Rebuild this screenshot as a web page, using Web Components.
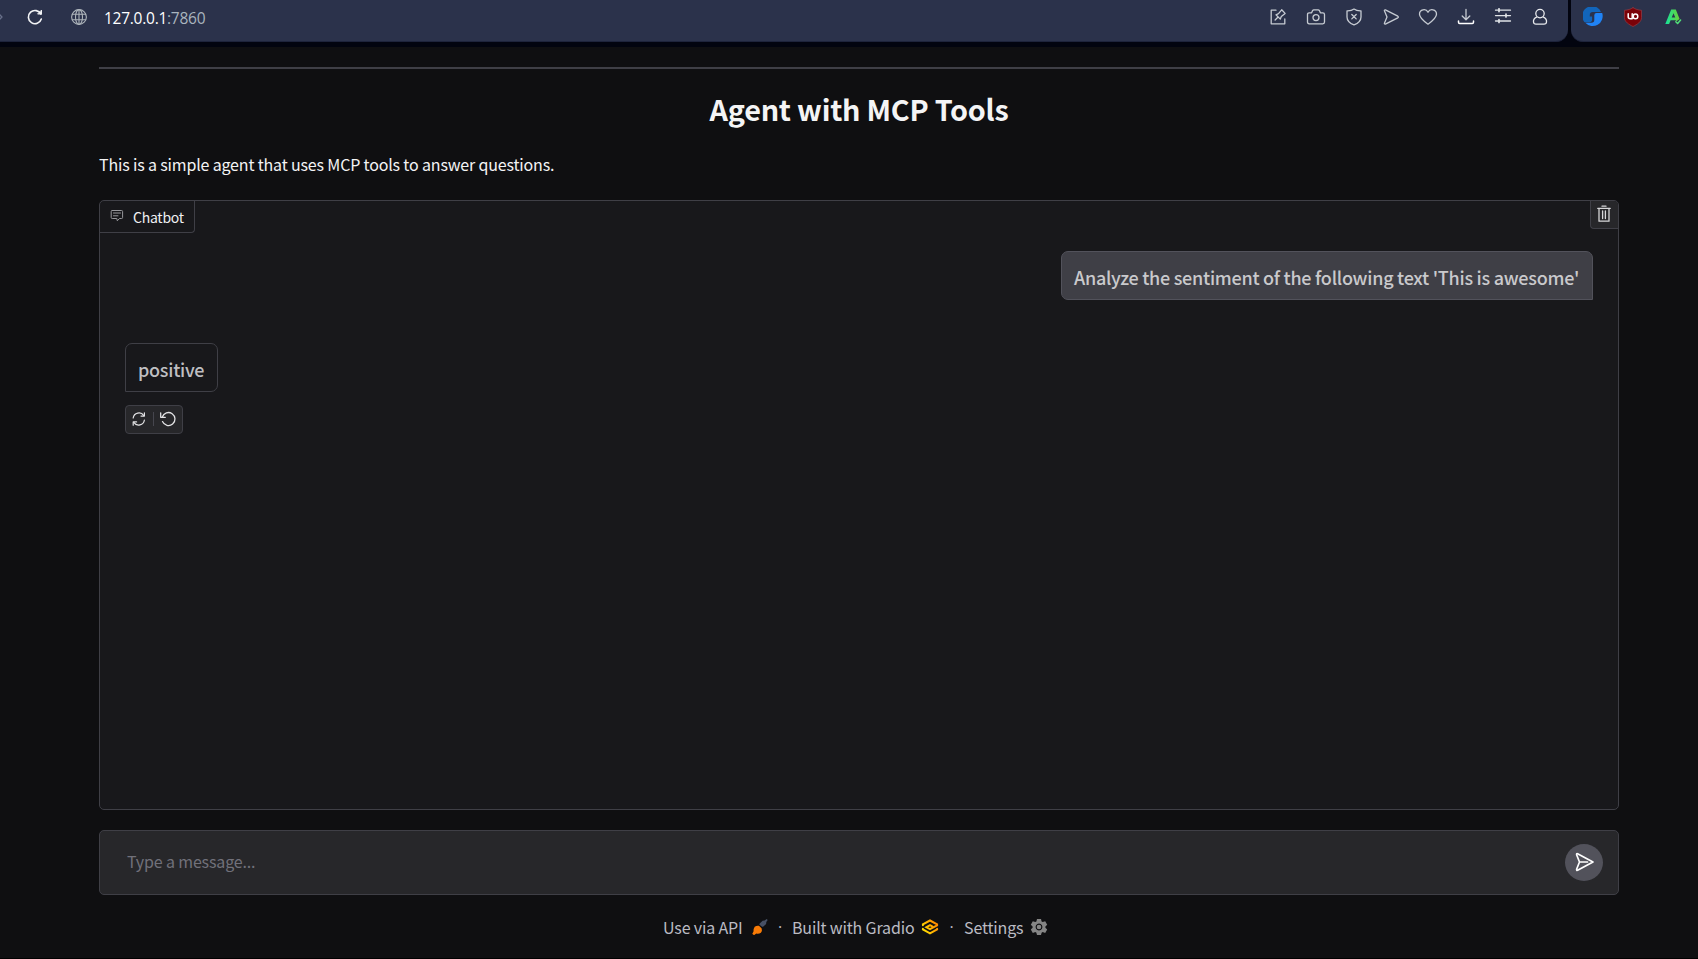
<!DOCTYPE html>
<html lang="en"><head><meta charset="utf-8"><title>Agent with MCP Tools</title>
<style>html,body{margin:0;background:#0f0f11;height:959px;overflow:hidden}</style></head>
<body><agent-page></agent-page>
<script>
const ICONS = {
 next:[10,20,'<path d="M-3 5l5 5-5 5" stroke="#68708a"/>'],
 reload:[18,18,'<path d="M14.9 6.2A6.6 6.6 0 1 0 15.3 11" stroke="#f2f3f5" stroke-width="1.6"/><path d="M12 6h3.5V2.5z" fill="#f2f3f5" stroke="#f2f3f5" stroke-width="1"/>'],
 globe:[18,18,'<g stroke="#aeb5bb" stroke-width="1.1"><circle cx="9" cy="9" r="7.4"/><ellipse cx="9" cy="9" rx="3.5" ry="7.4"/><path d="M9 1.6v14.8M2.4 6.2h13.2M2.4 11.8h13.2"/></g>'],
 pin:[18,18,'<path d="M7 2.2H2.2v13.6h13.6V11"/><path d="M6.1 12l3-3M7 6.8l4.3 4.3 1-2.5 3.8-3.2-3.4-3.6-3.2 3.9z"/>'],
 camera:[20,18,'<path d="M3.2 4.8h2.4l1-2.2q.4-.7 1.2-.7h4.4q.8 0 1.2.7l1 2.2h2.4q1.7 0 1.7 1.7v7.6q0 1.7-1.7 1.7H3.2q-1.7 0-1.7-1.7V6.5q0-1.7 1.7-1.7z"/><circle cx="10" cy="9.6" r="3"/>'],
 shield:[18,18,'<path d="M9 1.1c2 1.5 4.5 1.9 7 1.8v6c0 4-3.3 6.5-7 8-3.7-1.5-7-4-7-8v-6c2.5.1 5-.3 7-1.8z"/><path d="M6.8 6.5l4.4 4.4m0-4.4l-4.4 4.4"/>'],
 plane:[18,18,'<path d="M3.4 1.9L15.8 8.2q1.2.8 0 1.6L3.4 16.1Q2 16.3 2.5 15L5 9 2.5 3Q2 1.7 3.4 1.9z"/>'],
 heart:[20,18,'<path d="M10 16.2C5 12.5 1.5 9.5 1.5 6.2c0-5 6.5-6 8.5-2 2-4 8.5-3 8.5 2 0 3.3-3.5 6.3-8.5 10z"/>'],
 download:[18,18,'<path d="M9 1.5v10M5.2 8L9 11.8 12.8 8"/><path d="M1.5 13v1.3q0 1.2 1.2 1.2h12.6q1.2 0 1.2-1.2V13" stroke="#fff" stroke-width="1.5"/>'],
 sliders:[18,18,'<g stroke="#e0e3e7" transform="translate(0 -1)"><path d="M1.5 3.2h15M1.5 8.6h15M1.5 14h15"/><path d="M5 1.8v2.8M12 7.2v2.8M5 12.6v2.8" stroke-width="1.7"/></g>'],
 person:[18,18,'<g stroke="#e8eaed"><circle cx="9" cy="5.6" r="4.2"/><path d="M5.5 9.2C3 10.3 2.3 12 2.5 14q.2 2.2 2.5 2.2h8q2.3 0 2.5-2.2c.2-2-.5-3.7-3-4.8"/></g>'],
 swirl:[20,20,'<g stroke="none"><path d="M14.5 .8A9.8 9.8 0 0 0 1.5 15.2H6.5q2.6 0 2.6-2.6V9.5H6.8V8q0-3 3-3h8.2A10 10 0 0 0 14.5.8z" fill="#1265ba"/><path d="M19.2 6H13.5q-2.2 0-2.2 2.2V13q0 2.8-2.8 2.8H2.3A10 10 0 0 0 19.2 6z" fill="#2083f5"/></g>'],
 ublock:[20,20,'<path d="M10 .7c2.600 1.700 5 2.300 8.500 2.600v7.200c0 4.500-4.500 7-8.500 9-4-2-8.500-4.500-8.500-9V3.300C5 3 7.400 2.400 10 .7z" fill="#7b0208" stroke="#983b43" stroke-width=".7"/><path d="M5.200 6.800v3.300q0 1.700 2.200 1.700h1.800V6.800" stroke="#fff" stroke-width="1.500"/><circle cx="12.500" cy="9.400" r="2.300" stroke="#fff" stroke-width="1.500"/>'],
 alogo:[20,20,'<defs><linearGradient id="g"><stop stop-color="#15e39d"/><stop offset="1" stop-color="#6bd036"/></linearGradient></defs><path d="M7.200 2.500h4.600l3.800 9.500-3.100 2.200-1-.9H6.600l-1.500 3.700H1.300zM9.500 6.200L7.700 10.600h3.600z" fill="url(#g)" fill-rule="evenodd" stroke="none"/><path d="M11.800 14.700l1.800 1.800 3-3.500" stroke="#52e07a" stroke-width="1.500"/>'],
 chat:[14,14,'<path d="M2.2 1.5h9.4q1 0 1 1v6q0 1-1 1H9.5L7.3 11.8 6.8 9.5H2.2q-1 0-1-1v-6q0-1 1-1z" stroke="#98989c" stroke-width="1"/><path d="M3.500 4h7M3.500 6.800h4.500" stroke="#98989c" stroke-width="1"/>'],
 trash:[14,18,'<g stroke="#d7d7d9" stroke-width="1.3"><path d="M.8 3.400h12.400M2 3.400v12.800h10V3.400M5 1.200h4M5.600 6v7.600M8.400 6v7.600"/></g>'],
 retry:[16,16,'<g stroke="#e2e2e4" stroke-width="1.2"><path d="M2.200 7A5.800 5.800 0 0 1 12.800 4.600M13.400 9A5.800 5.800 0 0 1 2.800 11.400"/><path d="M13.400 1.800v3.300h-3.400M2.200 14.200v-3.300h3.400"/></g>'],
 undo:[18,16,'<path d="M3.300 6A6.500 6.500 0 1 1 3.500 10.600M1.700 1.800v4.500h4.600" stroke="#e2e2e4" stroke-width="1.3"/>'],
 send:[20,20,'<path d="M2.600 1.700Q1.300 1.300 1.700 3L4.500 10 1.700 17q-.4 1.700.9 1.300L18 10zM4.500 10h8" stroke="#fff" stroke-width="1.7"/>'],
 rocket:[17,17,'<g stroke="none"><path d="M9 4.200l2.600-2.500 2-.1L15.700 0l1 1-1.400 2-.2 2-2.700 2.600q-1 .5-1.700 0L8.500 5.800q-.4-.8.500-1.600z" fill="#475064"/><path d="M3.700 7.700q2-1.400 4.300-.9l2.700 2.600q.8 2.300-.8 4.300-2 1.400-4.600.8l-2 1.500-1-.3-1-1 1.200-2.100q-.2-3 1.200-4.900z" fill="#f97b06"/></g>'],
 gradio:[18,16,'<defs><linearGradient id="o" gradientUnits="userSpaceOnUse" x1="2" y1="12" x2="16" y2="4"><stop stop-color="#ffe000"/><stop offset="1" stop-color="#ff8700"/></linearGradient></defs><g stroke="url(#o)" stroke-width="2" stroke-linejoin="miter"><path d="M1.900 6.200V5.300L9 1.500l7.100 3.800v1L9 10.200 5.400 8.300 9 6.200l2.200 1.200M1.900 9.700v.7L9 14.300l7.100-3.900v-.7"/></g>'],
 gear:[18,18,'<g stroke="none" fill="#858585"><path fill-rule="evenodd" d="M7 1h4l.6 2.500 1.100.6 2.500-.8 2 3.500L15.400 8.500v1.200l1.800 1.700-2 3.500-2.500-.8-1.100.7L11 17H7l-.6-2.300-1.100-.6-2.500.8-2-3.500 1.800-1.700V8.500L.8 6.800l2-3.500 2.500.8 1.100-.6zM9 5.600a3.400 3.400 0 1 0 .01 0z"/><circle cx="9" cy="9" r="2.300"/></g>']
};
const define=(name,css,html)=>customElements.define(name,class extends HTMLElement{
 constructor(){super();this.attachShadow({mode:'open'}).innerHTML=`<style>*{box-sizing:border-box}${css}</style>${html}`}
});
customElements.define('ui-icon',class extends HTMLElement{
 connectedCallback(){const[w,h,body]=ICONS[this.getAttribute('name')];
 this.attachShadow({mode:'open'}).innerHTML=`<style>:host{display:block;flex:none;width:${w}px;height:${h}px}svg{display:block}</style><svg width="${w}" height="${h}" viewBox="0 0 ${w} ${h}" fill="none" stroke="#c6cbd2" stroke-width="1.3" stroke-linejoin="round" stroke-linecap="round">${body}</svg>`}
});
define('browser-bar',`:host{display:flex;gap:3px;height:47px;background:#02040f;padding-bottom:5px}
.g{background:#2b324b;height:42px;display:flex;align-items:center;padding-bottom:7px;border-bottom:1px solid #1e243c}
.a{width:1568px;border-radius:0 0 12px 0}.b{width:127px;border-radius:0 0 0 12px;padding-left:12px}
.url{font:15.5px/22px "Open Sans",sans-serif;letter-spacing:-.26px;color:#a9b4be;margin-left:16px;width:120px;padding-top:1px}.url b{font-weight:400;color:#fff}
.tools{display:flex;justify-content:space-between;margin-left:auto;width:280px;margin-right:19px}
`,`<div class="g a"><ui-icon name="next"></ui-icon><ui-icon name="reload" style="margin-left:16px"></ui-icon><ui-icon name="globe" style="margin-left:26px"></ui-icon><span class="url"><b>127.0.0.1</b>:7860</span>
<div class="tools">${['pin','camera','shield','plane','heart','download','sliders','person'].map(n=>`<ui-icon name="${n}"></ui-icon>`).join('')}</div></div>
<div class="g b"><ui-icon name="swirl"></ui-icon><ui-icon name="ublock" style="margin-left:20px"></ui-icon><ui-icon name="alogo" style="margin-left:21px"></ui-icon></div>`);
define('chat-bubble',`:host{display:block;height:49px;border:1px solid #3f3f46;border-radius:7px 7px 7px 0;font-size:18px;line-height:27px;letter-spacing:-.26px;font-weight:500;color:#bfbfc2;padding:12px 0 0 12px;white-space:nowrap;box-sizing:border-box}
:host([user]){background:#3f3f46;border-color:#52525b;border-radius:7px 7px 0 7px;color:#c9c9cc}`,`<slot></slot>`);
define('chat-panel',`:host{display:block;height:610px;border:1px solid #3f3f46;border-radius:5px;background:#18181b;box-sizing:border-box;overflow:hidden}
header{display:flex;justify-content:space-between;align-items:flex-start}
.label{display:flex;width:95px;height:32px;border:solid #3f3f46;border-width:0 1px 1px 0;border-radius:0 0 4px 0;padding:8px 0 0 10px;gap:9px;color:#f0f0f2;font-size:14px;line-height:16px;letter-spacing:-.25px}
.trash{width:28px;height:28px;background:#27272a;border:solid #3f3f46;border-width:0 0 1px 1px;border-radius:0 0 0 4px;padding:4px 0 0 6px}
.user{width:532px;margin:18px 25px 0 auto}.bot{width:93px;margin:43px 0 0 25px}
.actions{display:flex;align-items:center;width:58px;height:29px;margin:13px 0 0 25px;background:#27272a;border:1px solid #3f3f46;border-radius:4px;padding:0 0 2px 5px}
i{width:1px;height:14px;background:#46464e;margin:0 5px 0 6px}`,`<header><div class="label"><ui-icon name="chat"></ui-icon><span>Chatbot</span></div><div class="trash"><ui-icon name="trash"></ui-icon></div></header>
<chat-bubble class="user" user>Analyze the sentiment of the following text 'This is awesome'</chat-bubble><chat-bubble class="bot">positive</chat-bubble>
<div class="actions"><ui-icon name="retry"></ui-icon><i></i><ui-icon name="undo"></ui-icon></div>`);
define('message-input',`:host{display:flex;align-items:center;justify-content:space-between;height:65px;margin-top:20px;border:1px solid #3f3f46;border-radius:5px;background:#27272a;box-sizing:border-box;padding:0 15px 0 27px;color:#71717a;font-size:16px;letter-spacing:-.15px}
span{padding-bottom:3px}
.send{width:38px;height:37px;border-radius:50%;background:#52525b;display:grid;place-items:center;padding:0 0 1px 2px}`,`<span>Type a message...</span><div class="send"><ui-icon name="send"></ui-icon></div>`);
define('page-footer',`:host{display:flex;align-items:center;margin:20px 0 0 564px;height:24px;font-size:16px;line-height:24px;letter-spacing:-.16px;color:#bbbbc3;white-space:nowrap}
span{flex:none}.dot{font-family:"Open Sans",sans-serif;text-align:center;width:24px}`,`<span style="width:88px">Use via API</span><ui-icon name="rocket"></ui-icon><span class="dot">·</span><span style="width:129px">Built with Gradio</span><ui-icon name="gradio"></ui-icon><span class="dot" style="width:25px">·</span><span style="width:66px">Settings</span><ui-icon name="gear"></ui-icon>`);
define('agent-page',`:host{display:block;height:959px;border-bottom:1px solid #000;box-sizing:border-box;background:#0f0f11;font-family:"Noto Sans CJK SC",sans-serif;color:#f4f4f5}
main{width:1520px;margin-left:99px}.rule{height:2px;background:#3f3f46;margin-top:20px}
h1{margin:20px 0 0;font-size:28.8px;line-height:40px;height:40px;font-weight:600;letter-spacing:-.25px;text-align:center}
p{margin:23px 0 0;font-size:16px;line-height:24px;height:24px;letter-spacing:-.165px}chat-panel{margin-top:24px}`,`<browser-bar></browser-bar><main><div class="rule"></div><h1>Agent with MCP Tools</h1><p>This is a simple agent that uses MCP tools to answer questions.</p><chat-panel></chat-panel><message-input></message-input><page-footer></page-footer></main>`);
</script></body></html>
